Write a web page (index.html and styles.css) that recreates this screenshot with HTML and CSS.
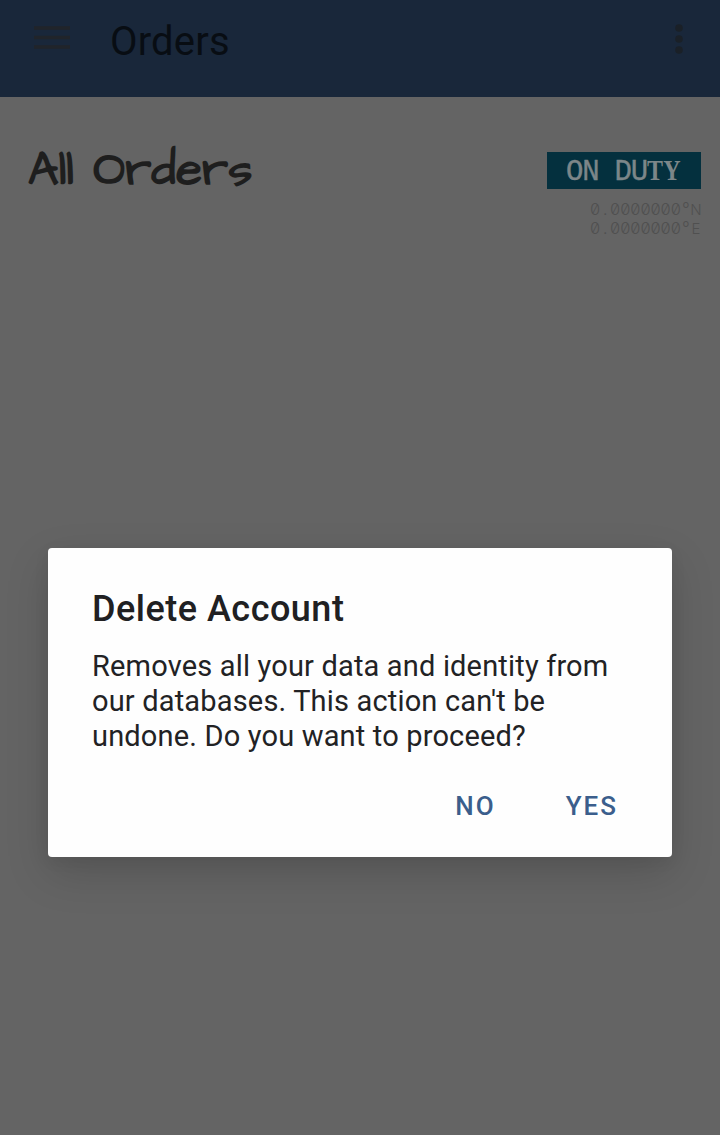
FILE: index.html
```html
<!DOCTYPE html>
<html lang="en">
<head>
<meta charset="utf-8">
<title>Orders</title>
<link rel="stylesheet" href="styles.css">
</head>
<body>
<header class="app-bar">
  <svg class="menu-icon" width="36" height="26" viewBox="0 0 36 26"><path d="M0 3h36M0 12.5h36M0 22h36"/></svg>
  <h1 class="app-title">Orders</h1>
  <svg class="more-icon" width="10" height="30" viewBox="0 0 10 30"><circle cx="5" cy="4" r="3.8"/><circle cx="5" cy="15" r="3.8"/><circle cx="5" cy="26" r="3.8"/></svg>
</header>
<main class="content">
  <h2 class="page-title">All Orders</h2>
  <div class="duty">
    <div class="duty-badge">ON DU<span class="slab">T</span><span class="slab">Y</span></div>
    <div class="coords"><span>0</span><span>.</span><span>0</span><span>0</span><span>0</span><span>0</span><span>0</span><span>0</span><span>0</span><span class="degree">°</span><span class="axis">N</span></div>
    <div class="coords"><span>0</span><span>.</span><span>0</span><span>0</span><span>0</span><span>0</span><span>0</span><span>0</span><span>0</span><span class="degree">°</span><span class="axis">E</span></div>
  </div>
</main>
<section class="dialog" role="alertdialog">
  <h3 class="dialog-title">Delete Account</h3>
  <p class="dialog-text">Removes all your data and identity from<br>our databases. This action can't be<br>undone. Do you want to proceed?</p>
  <div class="actions"><button class="action">NO</button><button class="action">YES</button></div>
</section>
</body>
</html>
```
FILE: styles.css
```css
* { box-sizing: border-box; }
body {
  margin: 0;
  height: 1135px;
  overflow: hidden;
  background: #646464;
  font-family: Roboto, sans-serif;
}
.app-bar {
  height: 97px;
  padding: 0 36px 16px 34px;
  display: flex;
  align-items: center;
  background: #19273a;
}
.menu-icon {
  margin-top: -5px;
  stroke: #20242a;
  stroke-width: 3.6;
}
.app-title {
  margin: 2px auto 0 40px;
  font-size: 40px;
  font-weight: 400;
  line-height: 48px;
  letter-spacing: .2px;
  color: #080d13;
}
.more-icon { fill: #1a2027; margin-top: -3px; }
.content {
  height: 451px;
  padding: 46px 19px 0 28px;
  display: flex;
  justify-content: space-between;
}
.page-title {
  margin: 2px 0 0;
  height: 50px;
  font: 700 47.5px/50px "Architects Daughter", Lato, sans-serif;
  letter-spacing: .2px;
  color: #1e1e1e;
  white-space: nowrap;
}
.duty { width: 154px; padding-top: 9px; }
.duty-badge {
  height: 37px;
  margin-bottom: 11px;
  padding: 1px 20px 0 19px;
  display: flex;
  align-items: baseline;
  background: #04303e;
  color: #7c8689;
  font: 400 29px/39px "Liberation Mono", monospace;
  letter-spacing: -1.2px;
  -webkit-text-stroke: .4px #7c8689;
  white-space: pre;
}
.slab {
  width: 16.2px;
  font: 700 24px/30px "Liberation Serif", serif;
  letter-spacing: 0;
  -webkit-text-stroke: 0;
  transform: scaleY(1.2);
  transform-origin: 0 80%;
}
.coords {
  display: flex;
  justify-content: flex-end;
  font: 300 16.5px/19px Inter, sans-serif;
  font-feature-settings: "zero", "tnum";
  color: #505050;
}
.coords span {
  width: 10.1px;
  display: flex;
  justify-content: center;
}
.coords .degree { font-size: 17px; }
.coords .axis { font-size: 15px; }
.dialog {
  width: 624px;
  height: 309px;
  margin: 0 auto;
  padding: 38px 44px 0;
  border-radius: 4px;
  background: #fefefe;
  box-shadow: 0 16px 44px rgba(0, 0, 0, .15), 0 4px 16px rgba(0, 0, 0, .06);
}
.dialog-title {
  margin: 0 0 17px;
  font-size: 36px;
  font-weight: 500;
  line-height: 46px;
  letter-spacing: .5px;
  color: #202022;
}
.dialog-text {
  margin: 0;
  font-size: 29px;
  line-height: 34.8px;
  letter-spacing: .17px;
  color: #222224;
  white-space: nowrap;
}
.actions {
  margin-top: 36px;
  padding-right: 10px;
  display: flex;
  justify-content: flex-end;
  gap: 70px;
}
.action {
  padding: 0;
  border: 0;
  background: none;
  font: 500 26px/34px Roboto, sans-serif;
  letter-spacing: 2px;
  color: #3b5e8c;
}
```
